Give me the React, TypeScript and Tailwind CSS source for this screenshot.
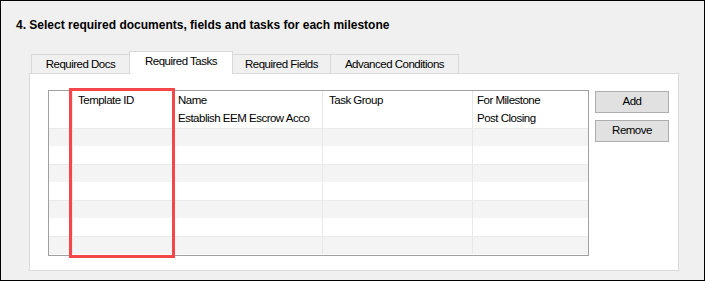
const tabs = [
  { label: 'Required Docs', width: 'w-[99px]', active: false },
  { label: 'Required Tasks', width: 'w-[104px]', active: true },
  { label: 'Required Fields', width: 'w-[99px]', active: false },
  { label: 'Advanced Conditions', width: 'w-[129px]', active: false },
]

const columns = [
  { label: 'Template ID', width: 'w-[100px]', pad: 'pl-[5px]' },
  { label: 'Name', width: 'w-[150px]', pad: 'pl-[5px]' },
  { label: 'Task Group', width: 'w-[150px]', pad: 'pl-[6px]' },
  { label: 'For Milestone', width: 'flex-1', pad: 'pl-[4px]' },
]

const rows = [
  ['', 'Establish EEM Escrow Acco', '', 'Post Closing'],
  ['', '', '', ''],
  ['', '', '', ''],
  ['', '', '', ''],
  ['', '', '', ''],
  ['', '', '', ''],
  ['', '', '', ''],
  ['', '', '', ''],
]

// narrow-ish UI text, close to the WinForms default font
const ui = "font-['Liberation_Sans',Arial,sans-serif] text-[11.5px] tracking-[-0.5px]"

function GridRow({ cells, shaded, header }: { cells: string[]; shaded?: boolean; header?: boolean }) {
  return (
    <div
      className={`flex ${header ? 'h-[19px]' : 'h-[18px]'} ${shaded ? 'bg-[#f4f4f4] border-t border-[#ebebeb]' : ''}`}
    >
      <div className="w-[24px] border-r border-[#e8e8e8]" />
      {columns.map((col, i) => (
        <div
          key={col.label}
          className={`${col.width} ${col.pad} ${i < columns.length - 1 ? 'border-r border-[#e8e8e8]' : ''} flex items-center text-black whitespace-nowrap overflow-hidden`}
        >
          {cells[i]}
        </div>
      ))}
    </div>
  )
}

export default function App() {
  return (
    <div className={`w-[705px] h-[281px] bg-[#f0f0f0] border border-black overflow-hidden ${ui}`}>
      <h1 className="pl-[15px] pt-[17px] text-[12px] leading-[14px] tracking-normal font-bold text-black">
        4. Select required documents, fields and tasks for each milestone
      </h1>

      <div className="ml-[28px] mt-[19px] w-[650px]">
        <div className="flex items-end h-[22px] pl-[2px]">
          {tabs.map((tab, i) => (
            <div
              key={tab.label}
              className={`${tab.width} ${i > 0 ? '-ml-px' : ''} flex items-center justify-center border-t border-x border-[#d9d9d9] text-black ${
                tab.active ? 'h-[23px] -mb-px bg-white relative z-10 pb-[3px]' : 'h-[19px] bg-[#f0f0f0] pt-px'
              }`}
            >
              {tab.label}
            </div>
          ))}
        </div>

        <div className="h-[198px] bg-white border border-[#d9d9d9] pl-[18px] pt-[16px] flex gap-[6px]">
          <div className="relative w-[541px] h-[166px] border border-[#a0a0a0] bg-white">
            <GridRow cells={columns.map((c) => c.label)} header />
            {rows.map((r, i) => (
              <GridRow key={i} cells={r} shaded={i % 2 === 1} />
            ))}
            <div className="absolute left-[20px] top-[-3px] w-[106px] h-[170px] border-[3px] border-[#f44848]" />
          </div>

          <div className="flex flex-col gap-[7px] pt-px">
            <button className="w-[74px] h-[22px] bg-[#e1e1e1] border border-[#adadad] text-black">
              Add
            </button>
            <button className="w-[74px] h-[22px] bg-[#e1e1e1] border border-[#adadad] text-black">
              Remove
            </button>
          </div>
        </div>
      </div>
    </div>
  )
}
